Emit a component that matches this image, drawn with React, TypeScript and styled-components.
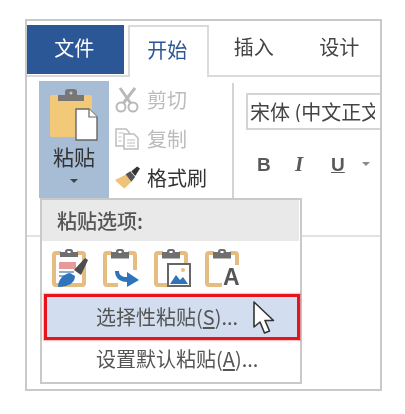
import React from "react";
import styled, { createGlobalStyle } from "styled-components";

const Global = createGlobalStyle`
  html, body { margin: 0; padding: 0; background: #fff; }
  body { font-family: "Noto Sans CJK SC", "Liberation Sans", sans-serif; }
`;

const Page = styled.div`
  width: 405px;
  height: 414px;
  box-sizing: border-box;
  padding: 19px 0 0 25px;
  overflow: hidden;
  filter: blur(0.45px);
`;

const Frame = styled.div`
  position: relative;
  box-sizing: border-box;
  width: 357px;
  height: 372px;
  border: 2px solid #c9c9c9;
  overflow: hidden;
  background: #fff;
`;

const TabBar = styled.div`
  display: flex;
  height: 56px;
  box-sizing: border-box;
  padding-top: 4px;
  border-bottom: 2px solid #dadada;
`;

const Tab = styled.div<{ $w: number; $kind?: "file" | "active" }>`
  width: ${(p) => p.$w}px;
  box-sizing: border-box;
  display: flex;
  align-items: center;
  justify-content: center;
  font-size: 20px;
  line-height: 1;
  padding: 0 0 6px 4px;
  color: ${(p) => (p.$kind === "file" ? "#fff" : p.$kind === "active" ? "#2b5797" : "#444")};
  background: ${(p) => (p.$kind === "file" ? "#2b5797" : "#fff")};
  ${(p) => (p.$kind === "file" ? "height: 49px; padding: 0 3px 3px 0;" : "")}
  ${(p) =>
    p.$kind === "active"
      ? "margin-left: 4px; height: 52px; border: 2px solid #dadada; border-bottom: none; position: relative; z-index: 1; padding: 0 3px 4px 0;"
      : ""}
`;

const Ribbon = styled.div`
  display: flex;
  height: 160px;
  box-sizing: border-box;
  padding: 4px 0 0 12px;
  border-bottom: 2px solid #e2e2e2;
`;

const PasteButton = styled.div`
  width: 70px;
  height: 117px;
  background: #a7bcd5;
  display: flex;
  flex-direction: column;
  align-items: center;
  padding-top: 8px;
  box-sizing: border-box;
`;

const PasteLabel = styled.div`
  font-size: 21px;
  line-height: 24px;
  color: #333;
  margin-top: 3px;
`;

const CaretDown = styled.div<{ $color?: string }>`
  width: 0;
  height: 0;
  border-left: 4px solid transparent;
  border-right: 4px solid transparent;
  border-top: 4px solid ${(p) => p.$color ?? "#444"};
`;

const PasteCaret = styled(CaretDown)`
  margin-top: 11px;
`;

const ClipColumn = styled.div`
  width: 123px;
  padding: 0 0 0 6px;
  box-sizing: border-box;
  display: flex;
  flex-direction: column;
`;

const ClipRow = styled.div<{ $off?: boolean }>`
  height: 39px;
  box-sizing: border-box;
  padding-bottom: 2px;
  display: flex;
  align-items: center;
  gap: 7px;
  font-size: 20px;
  line-height: 1;
  color: ${(p) => (p.$off ? "#bcbcbc" : "#333")};
`;

const IconSlot = styled.svg`
  flex: none;
  display: block;
`;

const FontGroup = styled.div`
  flex: 1;
  min-width: 0;
  margin-top: 2px;
  height: 115px;
  border-left: 2px solid #d4d4d4;
  padding: 10px 0 0 12px;
  box-sizing: border-box;
  display: flex;
  flex-direction: column;
`;

const Combo = styled.div`
  height: 37px;
  box-sizing: border-box;
  border: 2px solid #d4d4d4;
  border-right: none;
  display: flex;
  align-items: center;
  padding-left: 2px;
  margin-right: -2px;
`;

const ComboValue = styled.span`
  width: 125px;
  font-size: 20px;
  line-height: 1;
  color: #444;
  white-space: nowrap;
  overflow: hidden;
`;

const FormatRow = styled.div`
  display: flex;
  align-items: center;
  margin-top: 22px;
  padding-left: 11px;
  height: 24px;
`;

const FormatKey = styled.span<{ $w: number; $i?: boolean; $u?: boolean }>`
  width: ${(p) => p.$w}px;
  font-family: ${(p) => (p.$i ? '"Liberation Serif"' : '"Liberation Sans"')}, sans-serif;
  font-size: ${(p) => (p.$i ? 21 : 19)}px;
  font-weight: 700;
  font-style: ${(p) => (p.$i ? "italic" : "normal")};
  text-decoration: ${(p) => (p.$u ? "underline" : "none")};
  color: #5a5a5a;
  line-height: 1;
`;

const Menu = styled.div`
  position: absolute;
  left: 13px;
  top: 177px;
  width: 262px;
  height: 186px;
  box-sizing: border-box;
  border: 2px solid #c9c9c9;
  background: #fff;
  display: flex;
  flex-direction: column;
  z-index: 2;
`;

const MenuHeader = styled.div`
  height: 41px;
  background: #e9e9e9;
  display: flex;
  align-items: center;
  padding-left: 15px;
  font-size: 20px;
  font-weight: 500;
  color: #555;
  margin-right: 1px;
`;

const IconsRow = styled.div`
  height: 53px;
  display: flex;
  align-items: center;
  gap: 14px;
  padding: 0 0 0 10px;
`;

const MenuItem = styled.div<{ $hl?: boolean }>`
  position: relative;
  height: ${(p) => (p.$hl ? 46 : 42)}px;
  box-sizing: border-box;
  display: flex;
  align-items: center;
  padding: ${(p) => (p.$hl ? "0 0 0 49px" : "0 0 4px 54px")};
  margin-left: ${(p) => (p.$hl ? 2 : 0)}px;
  font-size: 20px;
  color: #555;
  line-height: 1;
  ${(p) =>
    p.$hl
      ? "background: #d2deef; border: 3px solid #e8141c; box-shadow: 0 0 1px 1px rgba(232,20,28,.25);"
      : ""}
  u { text-underline-offset: 2px; }
`;

const Cursor = styled.svg`
  position: absolute;
  left: 206px;
  top: 4px;
`;

const SmallClip = () => (
  <>
    <path d="M9 4H4a2 2 0 0 0-2 2v28a2 2 0 0 0 2 2h26a2 2 0 0 0 2-2V6a2 2 0 0 0-2-2h-5" fill="none" stroke="#e5bd80" strokeWidth="4" />
    <rect x="8" y="3" width="18" height="6.500" fill="#6f6f6f" />
    <rect x="13" y="0" width="8" height="5" rx="2.500" fill="#6f6f6f" />
    <rect x="15.500" y="2" width="3" height="2" fill="#fff" />
  </>
);

export default function App() {
  return (
    <Page>
      <Global />
      <Frame>
        <TabBar>
          <Tab $w={98} $kind="file">文件</Tab>
          <Tab $w={81} $kind="active">开始</Tab>
          <Tab $w={86}>插入</Tab>
          <Tab $w={86}>设计</Tab>
        </TabBar>
        <Ribbon>
          <PasteButton>
            <IconSlot width="48" height="52" viewBox="0 0 48 52">
              <path d="M2 6h38a2 2 0 0 1 2 2v38a2 2 0 0 1-2 2H2a2 2 0 0 1-2-2V8a2 2 0 0 1 2-2z" fill="#f2c879" />
              <rect x="8" y="6" width="26" height="6" fill="#777" />
              <path d="M15 6V3a3 3 0 0 1 3-3h6a3 3 0 0 1 3 3v3z" fill="#777" />
              <circle cx="21" cy="4" r="1.500" fill="#c7c7c7" />
              <path d="M26 20h13l8 8v23H26z" fill="#fff" stroke="#666" strokeWidth="1.400" />
              <path d="M39 20v8h8" fill="#fff" stroke="#666" strokeWidth="1.200" />
            </IconSlot>
            <PasteLabel>粘贴</PasteLabel>
            <PasteCaret />
          </PasteButton>
          <ClipColumn>
            <ClipRow $off>
              <IconSlot width="25" height="26" viewBox="0 0 25 26">
                <g fill="none" stroke="#b9b9b9" strokeWidth="2">
                  <path d="M5 1l10.500 15M20 1L8.500 16" strokeWidth="3" />
                  <circle cx="6" cy="20" r="4.500" />
                  <circle cx="18" cy="20" r="4.500" />
                </g>
              </IconSlot>
              剪切
            </ClipRow>
            <ClipRow $off>
              <IconSlot width="25" height="22" viewBox="0 0 25 22">
                <g fill="#fff" stroke="#bdbdbd" strokeWidth="1.500">
                  <path d="M1 1h10l3 3v14H1z" />
                  <path d="M9 6h10l4 4v11H9z" />
                  <path d="M3.500 5h5M3.500 9h3M3.500 13h3M12 12h8M12 15h8M12 18h8" strokeWidth="1.200" />
                </g>
              </IconSlot>
              复制
            </ClipRow>
            <ClipRow>
              <IconSlot width="25" height="26" viewBox="0 0 26 26">
                <path d="M0 15l12-6 5 8-7 7C6 21 3 18 0 15z" fill="#eec278" />
                <path d="M11 9l5-3 5 6-4 5z" fill="#555" />
                <path d="M17 6l6-5 3 2-5 8z" fill="#333" />
              </IconSlot>
              格式刷
            </ClipRow>
          </ClipColumn>
          <FontGroup>
            <Combo>
              <ComboValue>宋体 (中文正文</ComboValue>
            </Combo>
            <FormatRow>
              <FormatKey $w={38}>B</FormatKey>
              <FormatKey $w={36} $i>I</FormatKey>
              <FormatKey $w={31} $u>U</FormatKey>
              <CaretDown $color="#8a8a8a" />
            </FormatRow>
          </FontGroup>
        </Ribbon>
        <Menu>
          <MenuHeader>粘贴选项:</MenuHeader>
          <IconsRow>
            <IconSlot width="37" height="38" viewBox="0 0 37 38">
              <SmallClip />
              <rect x="5" y="8" width="25" height="26" fill="#fff" />
              <path d="M7 13h17v7H7z" fill="#e79a9a" />
              <path d="M7 23h15M7 27h12" stroke="#6a8fc0" strokeWidth="1.600" />
              <path d="M22 21L33 9l3 2-7 15z" fill="#4d4d4d" />
              <path d="M6 38c0-7 5-13 12-14l5 3c0 7-7 11-17 11z" fill="#2f74bb" />
            </IconSlot>
            <IconSlot width="37" height="38" viewBox="0 0 37 38">
              <SmallClip />
              <rect x="15" y="21" width="22" height="17" fill="#fff" />
              <path d="M16 22c0 4 3 6 8 6v-5l12 8-12 7v-5c-7 0-12-4-12-11z" fill="#2f74bb" />
            </IconSlot>
            <IconSlot width="37" height="38" viewBox="0 0 37 38">
              <SmallClip />
              <rect x="14" y="15" width="22" height="22" fill="#fff" stroke="#666" strokeWidth="2" />
              <path d="M16 35l6-9 4 5 3-3 5 7z" fill="#2f74bb" />
              <circle cx="29" cy="21" r="2" fill="#e8bf7d" />
            </IconSlot>
            <IconSlot width="37" height="38" viewBox="0 0 37 38">
              <SmallClip />
              <rect x="17" y="16" width="20" height="22" fill="#fff" />
              <text x="18" y="36" fontFamily="Liberation Sans" fontWeight="700" fontSize="23" fill="#555">A</text>
            </IconSlot>
          </IconsRow>
          <MenuItem $hl>
            选择性粘贴(<u>S</u>)...
            <Cursor width="22" height="34" viewBox="0 0 22 34">
              <path d="M1 1v25l6-5 4.500 11 5-2-4.500-10.500h8.500z" fill="#fff" stroke="#333" strokeWidth="1.600" strokeLinejoin="round" />
            </Cursor>
          </MenuItem>
          <MenuItem>设置默认粘贴(<u>A</u>)...</MenuItem>
        </Menu>
      </Frame>
    </Page>
  );
}
